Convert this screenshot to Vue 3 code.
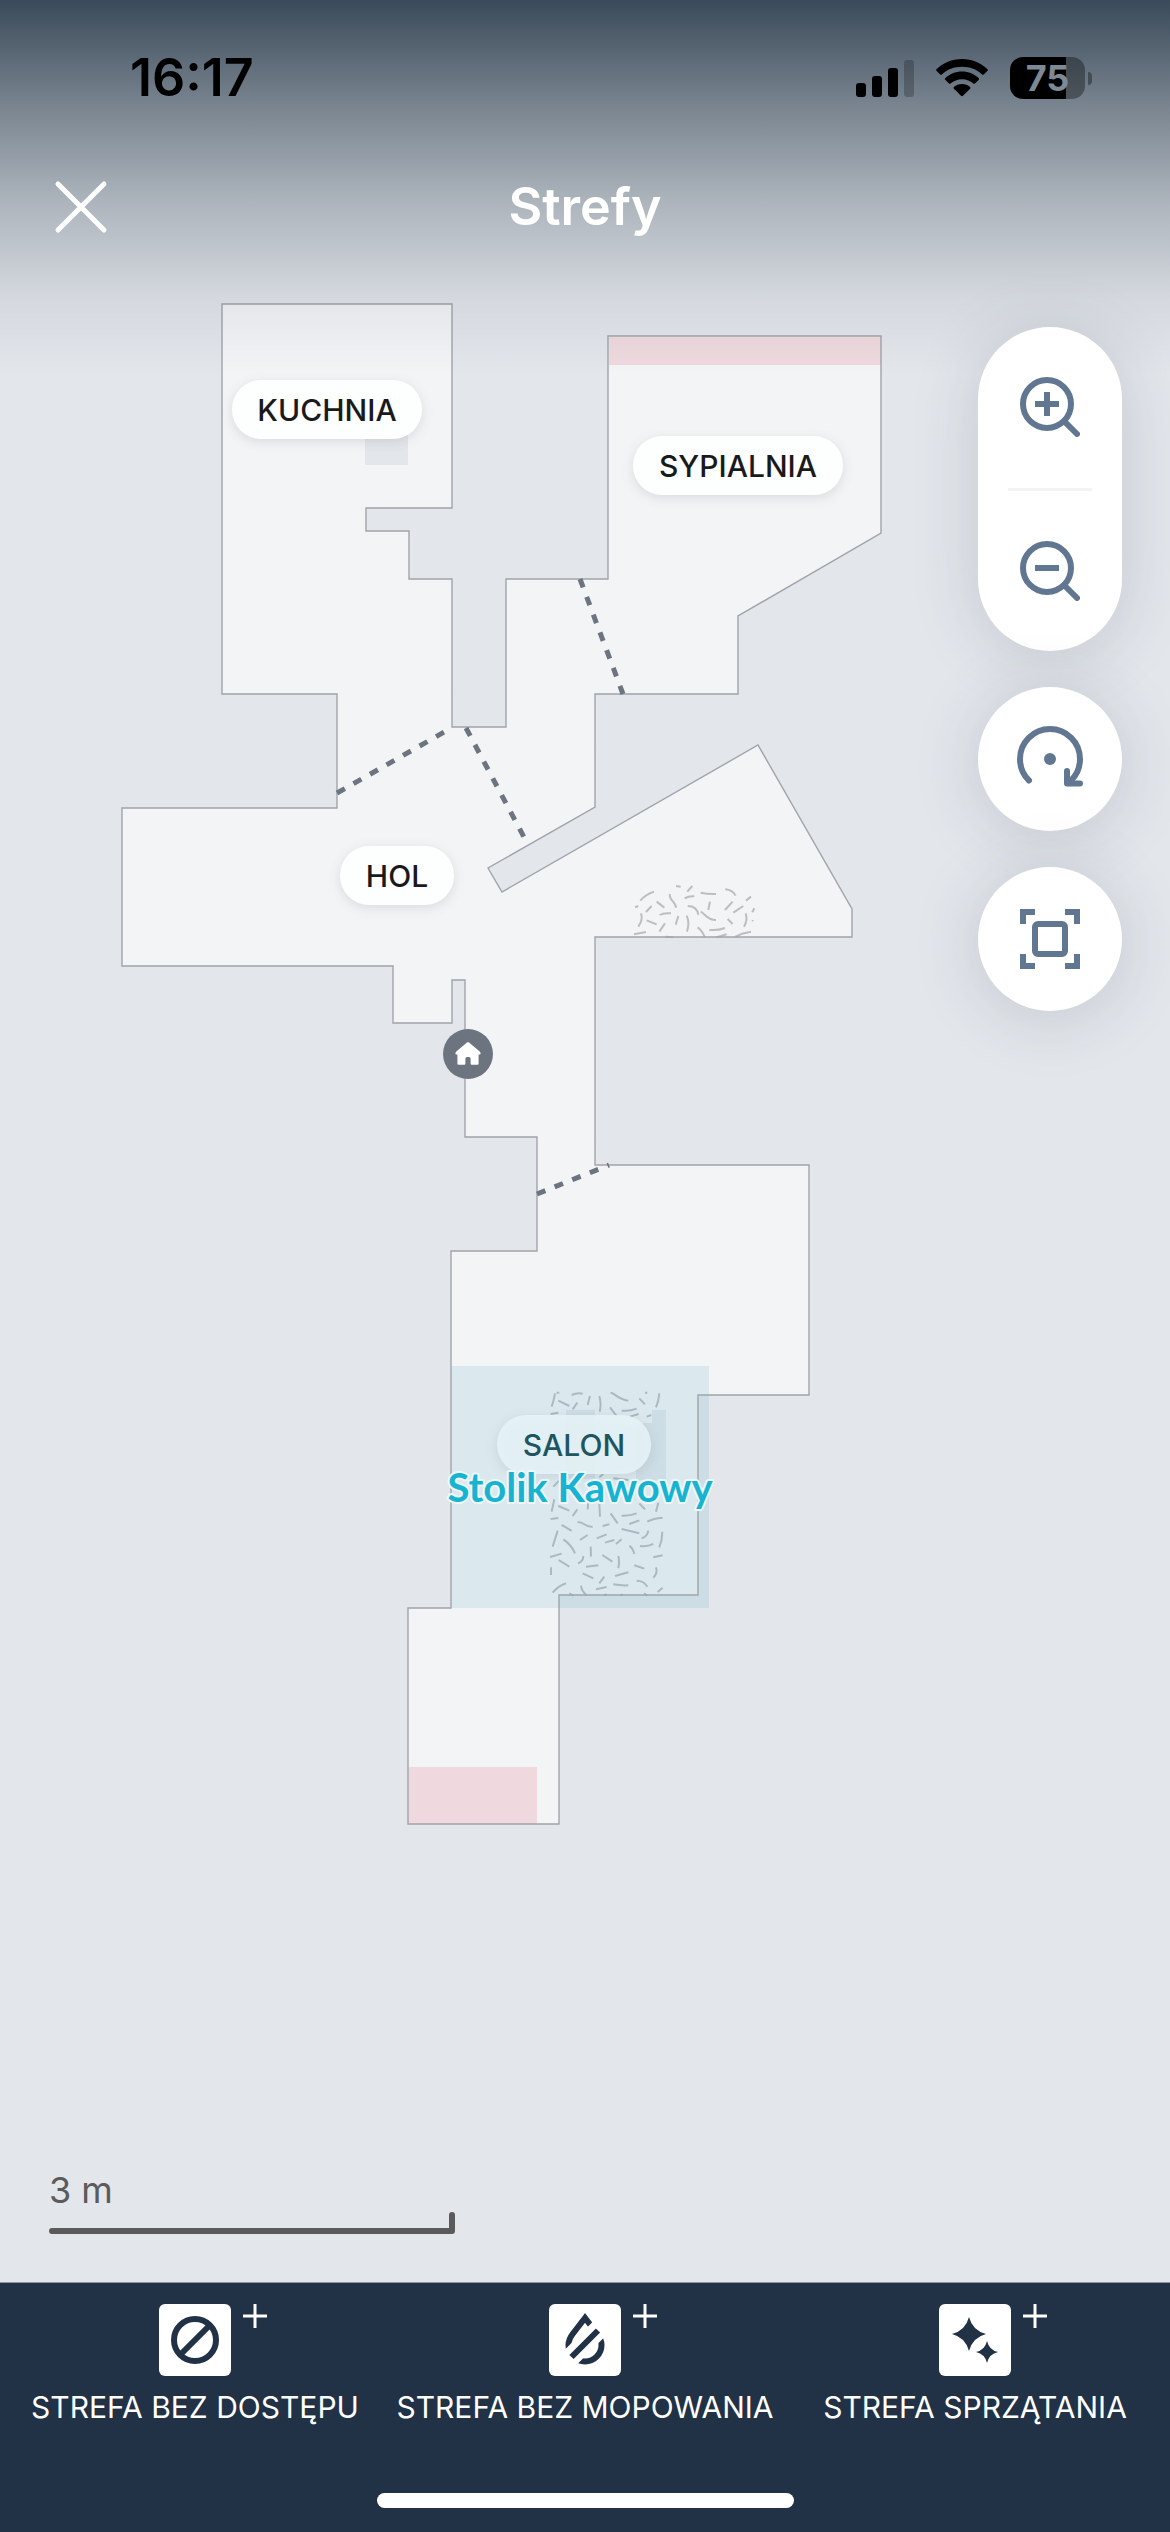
<template>
  <div class="zones">
    <main class="zones__stage">
      <!-- Floor plan -->
      <svg
        class="plan"
        viewBox="0 0 1170 2282"
        role="img"
        aria-label="Mapa mieszkania"
      >
        <path
          class="plan__floor"
          :d="outline"
        />

        <!-- Furniture -->
        <path
          class="plan__furniture"
          d="M365 420H408V465H365Z M566 1410H595V1479H566Z M652 1410H666V1480H636V1423H652Z"
        />

        <!-- Carpets -->
        <g
          v-for="carpet in carpets"
          :key="carpet.id"
          :transform="`translate(${carpet.x} ${carpet.y}) scale(0.3333)`"
        >
          <path
            class="plan__carpet"
            :d="carpet.d"
          />
        </g>

        <rect
          v-for="zone in zones"
          :key="zone.id"
          :class="`plan__zone--${zone.type}`"
          :x="zone.x"
          :y="zone.y"
          :width="zone.width"
          :height="zone.height"
        />

        <path
          class="plan__wall"
          :d="outline"
        />

        <line
          v-for="door in doors"
          :key="door.id"
          class="plan__door"
          :x1="door.x1"
          :y1="door.y1"
          :x2="door.x2"
          :y2="door.y2"
        />

        <g
          v-for="room in rooms"
          :key="room.name"
          class="room"
          :class="{ 'room--covered': room.covered }"
        >
          <rect
            class="room__pill"
            :x="room.x - room.width / 2"
            :y="room.y - 29"
            :width="room.width"
            height="59"
            rx="29"
          />
          <text
            class="room__name"
            :x="room.x"
            :y="room.y + 12"
          >{{ room.name }}</text>
        </g>

        <text
          class="plan__zone-name"
          x="580"
          y="1502"
        >Stolik Kawowy</text>

        <!-- Dock -->
        <g transform="translate(468 1054)">
          <circle
            class="plan__dock"
            r="25"
          />
          <path
            fill="#fff"
            d="M-1 -11.600Q0 -12.400 1 -11.600L12 -2.200Q13.200 -.8 12.200 .6H10.600V9.500Q10.600 10.800 9.300 10.800H3.800Q2.600 10.800 2.600 9.600V4.600Q2.600 3 1 3H-1Q-2.600 3 -2.600 4.600V9.600Q-2.600 10.800 -3.800 10.800H-9.300Q-10.600 10.800 -10.600 9.500V.6H-12.200Q-13.200 -.8 -12 -2.200Z"
          />
        </g>
      </svg>

      <!-- Header -->
      <header class="header">
        <div class="status">
          <time class="status__time">16:17</time>
          <div class="status__icons">
            <svg
              width="58"
              height="38"
              viewBox="0 0 58 38"
              aria-hidden="true"
            >
              <rect y="24" width="10" height="14" rx="3" />
              <rect x="16" y="17" width="10" height="21" rx="3" />
              <rect x="32" y="9" width="10" height="29" rx="3" />
              <rect x="48" y="1" width="10" height="37" rx="3" opacity=".22" />
            </svg>
            <svg
              width="52"
              height="38"
              viewBox="0 0 52 38"
              aria-hidden="true"
            >
              <path d="M26 0C36 0 45 4 51.500 10.200Q52.300 11 51.500 11.800L47.800 15.500Q47 16.200 46.200 15.500C41 10.500 34 7.800 26 7.800S11 10.500 5.800 15.500Q5 16.200 4.200 15.500L.5 11.800Q-.3 11 .5 10.200C7 4 16 0 26 0Z" />
              <path d="M26 12.600C32.600 12.600 38.500 15.200 42.800 19.200Q43.600 20 42.800 20.800L39 24.500Q38.200 25.200 37.400 24.500C34.400 21.800 30.400 20.200 26 20.200S17.600 21.800 14.600 24.500Q13.800 25.200 13 24.500L9.200 20.800Q8.400 20 9.200 19.200C13.500 15.200 19.400 12.600 26 12.600Z" />
              <path d="M26 25C29.200 25 32 26.200 34.100 28.100Q34.900 29 34.100 29.800L27 36.800Q26 37.700 25 36.800L17.900 29.800Q17.100 29 17.900 28.100C20 26.200 22.800 25 26 25Z" />
            </svg>
            <div class="battery">
              <span class="battery__body">75</span>
              <span class="battery__tip" />
            </div>
          </div>
        </div>

        <div class="header__nav">
          <button
            class="header__close"
            type="button"
            aria-label="Zamknij"
          >
            <svg
              width="54"
              height="54"
              viewBox="0 0 54 54"
            >
              <path
                d="M4 4L50 50M50 4L4 50"
                fill="none"
                stroke="#fff"
                stroke-width="5"
                stroke-linecap="round"
              />
            </svg>
          </button>
          <h1 class="header__title">Strefy</h1>
        </div>
      </header>

      <!-- Map controls -->
      <div class="controls">
        <div class="controls__group">
          <button
            class="controls__button"
            type="button"
            aria-label="Powiększ"
          >
            <svg
              class="controls__icon"
              width="60"
              height="60"
              viewBox="0 0 60 60"
            >
              <circle cx="27" cy="27" r="24" />
              <path d="M27 15V39M15 27H39" />
              <path d="M45 45L57 57" stroke-linecap="round" />
            </svg>
          </button>
          <span class="controls__divider" />
          <button
            class="controls__button"
            type="button"
            aria-label="Pomniejsz"
          >
            <svg
              class="controls__icon"
              width="60"
              height="60"
              viewBox="0 0 60 60"
            >
              <circle cx="27" cy="27" r="24" />
              <path d="M15 27H39" />
              <path d="M45 45L57 57" stroke-linecap="round" />
            </svg>
          </button>
        </div>

        <button
          class="controls__button controls__button--round"
          type="button"
          aria-label="Obróć mapę"
        >
          <svg
            class="controls__icon"
            width="72"
            height="72"
            viewBox="0 0 72 72"
          >
            <g
              stroke-linecap="round"
              stroke-linejoin="round"
            >
              <path d="M15 57.500A30 30 0 1 1 57 57.500L53.500 60" />
              <path d="M53 48V60.600H66" />
            </g>
            <circle
              class="controls__dot"
              cx="36"
              cy="36"
              r="6"
            />
          </svg>
        </button>

        <button
          class="controls__button controls__button--round"
          type="button"
          aria-label="Dopasuj mapę"
        >
          <svg
            class="controls__icon"
            width="60"
            height="60"
            viewBox="0 0 60 60"
          >
            <rect x="15" y="15" width="30" height="30" rx="3" />
            <path d="M3 15V3H15M45 3H57V15M57 45V57H45M15 57H3V45" />
          </svg>
        </button>
      </div>

      <!-- Scale -->
      <div class="scale">
        <span class="scale__label">3 m</span>
        <svg
          width="406"
          height="22"
          viewBox="0 0 406 22"
          aria-hidden="true"
        >
          <path
            d="M3 19H403V3"
            fill="none"
            stroke="#5b5b5b"
            stroke-width="6"
            stroke-linecap="round"
            stroke-linejoin="round"
          />
        </svg>
      </div>
    </main>

    <!-- Add a zone -->
    <footer class="toolbar">
      <div class="toolbar__actions">
        <button
          v-for="action in actions"
          :key="action.id"
          class="action"
          type="button"
        >
          <span class="action__icon">
            <svg
              v-if="action.id === 'no-go'"
              width="72"
              height="72"
              viewBox="0 0 72 72"
              fill="none"
              stroke="#213146"
              stroke-width="6"
            >
              <circle cx="36" cy="36" r="21" />
              <path d="M21.500 50.500L50.500 21.500" />
            </svg>
            <svg
              v-else-if="action.id === 'no-mop'"
              width="72"
              height="72"
              viewBox="0 0 72 72"
              fill="none"
              stroke="#213146"
              stroke-width="6"
            >
              <path d="M36 14L24 29.500C20.500 34 19.500 37 19.500 41A16.500 16.500 0 0 0 52.500 41C52.500 37 51.500 34 48 29.500Z" />
              <path
                d="M10 65L66 9"
                stroke="#fff"
                stroke-width="19"
              />
              <path d="M22.500 53L49 26.500" />
            </svg>
            <svg
              v-else
              width="72"
              height="72"
              viewBox="0 0 72 72"
              fill="#213146"
            >
              <path d="M30 13Q33.500 26.500 47 30Q33.500 33.500 30 47Q26.500 33.500 13 30Q26.500 26.500 30 13Z" />
              <path d="M30 19L35 25L41 30L35 35L30 41L25 35L19 30L25 25Z" />
              <path d="M48 37Q50 46 59 48Q50 50 48 59Q46 50 37 48Q46 46 48 37Z" />
              <path d="M48 41L51 45L55 48L51 51L48 55L45 51L41 48L45 45Z" />
            </svg>
          </span>
          <svg
            class="action__plus"
            width="24"
            height="24"
            viewBox="0 0 24 24"
            aria-hidden="true"
          >
            <path
              d="M12 0V24M0 12H24"
              stroke="#fff"
              stroke-width="3"
            />
          </svg>
          <span class="action__label">{{ action.label }}</span>
        </button>
      </div>
      <div class="toolbar__indicator" />
    </footer>
  </div>
</template>

<script setup>
// Wall outline, clockwise from the kitchen's top-left corner
const outline = [
  'M222 304H452V508H366V531H409V579H452V727H506V579H608V336H881V533L738 616V694',
  'H595V807L488 868L502 892L758 745L852 909V937H595V1165H809V1395H698V1595',
  'H559V1824H408V1608H451V1251H537V1137H465V980H452V1023H393V966H122V808H337V694H222Z'
].join('')

const rooms = [
  { name: 'KUCHNIA', x: 327, y: 409, width: 190 },
  { name: 'SYPIALNIA', x: 738, y: 465, width: 210 },
  { name: 'HOL', x: 397, y: 875, width: 114 },
  { name: 'SALON', x: 574, y: 1444, width: 154, covered: true }
]

const zones = [
  { id: 1, type: 'no-go', x: 609, y: 337, width: 272, height: 28 },
  { id: 2, type: 'no-go', x: 408, y: 1767, width: 129, height: 57 },
  { id: 3, type: 'clean', x: 451, y: 1366, width: 258, height: 242 }
]

const doors = [
  { id: 1, x1: 337, y1: 793, x2: 446, y2: 731 },
  { id: 2, x1: 466, y1: 728, x2: 525, y2: 839 },
  { id: 3, x1: 580, y1: 579, x2: 623, y2: 694 },
  { id: 4, x1: 537, y1: 1194, x2: 609, y2: 1165 }
]

// Fibre strokes, drawn at three units per map unit
const carpets = [
  {
    id: 'salon',
    x: 400,
    y: 1340,
    d: [
      'M465 160Q462 180 455 200M470 158H478M515 165Q530 158 548 161M475 182L508 198M532 188L518 208M570 168L563 195',
      'M598 168Q605 192 599 215M632 160C640 154 650 178 685 182M718 175L735 193M735 158H742M778 160Q777 182 768 202',
      'M452 222L475 218M665 212Q690 214 710 206M630 202L650 228M690 230L716 222M740 230L754 225',
      'M460 440L480 420M598 412L610 402M640 415L685 420',
      'M463 478L455 515M475 498L508 512M532 508L518 528M598 490L600 530M565 485L563 508M632 520L653 550',
      'M665 527Q690 528 710 520M718 490L735 508M775 488L768 515M452 537L475 534M742 545Q760 535 788 533M688 552L718 541',
      'M533 546C555 546 552 562 578 560M608 558L628 553M665 567L718 580M485 555L515 573M540 600L563 585M590 595L620 583',
      'M615 608L643 600M648 612L665 598M725 595Q742 590 745 572M473 572L458 620M490 598Q515 615 525 640M572 620L573 650',
      'M688 618Q698 622 703 642M720 618Q740 622 760 612M787 575Q787 600 778 622M450 651L485 641M607 645L637 665',
      'M655 648Q659 665 655 685M760 652L788 646M476 660L508 680M534 670Q550 665 550 648M558 680L595 676M703 676L733 686',
      'M768 682Q774 700 760 713M453 682V705M645 708L685 697M548 700L580 715M598 730L613 710M640 733Q660 737 685 736',
      'M458 758Q475 738 498 730M588 748L620 741M710 722Q732 722 742 740M543 737Q545 755 560 765M773 756L788 743M508 760L520 767M612 767L620 762M662 767L668 762M732 760L742 767'
    ].join('')
  },
  {
    id: 'hol',
    x: 460,
    y: 720,
    d: [
      'M525 562L535 558M541 542Q555 525 582 515M558 576L575 558M590 545L613 563M543 580Q550 598 535 620',
      'M522 643L558 636M560 601L590 613M599 585Q610 578 633 580M598 635L615 610M655 588L647 614M630 522C625 540 648 545 648 563',
      'M648 498L662 500M682 515L697 498M674 535Q685 528 703 529M683 558C705 558 713 570 715 585M680 587Q690 608 681 635',
      'M713 622Q725 630 735 652M722 518Q745 523 768 522M750 545L745 570M722 575C735 580 740 600 768 600M748 630Q775 632 795 624',
      'M770 652L800 643M616 650L640 652M796 508Q818 510 827 527M795 570L818 545M820 578L850 558M803 597L818 612',
      'M857 580Q864 600 852 620M858 542L873 530M883 565L877 577M878 600V604M826 650Q848 638 873 635'
    ].join('')
  }
]

const actions = [
  { id: 'no-go', label: 'STREFA BEZ DOSTĘPU' },
  { id: 'no-mop', label: 'STREFA BEZ MOPOWANIA' },
  { id: 'clean', label: 'STREFA SPRZĄTANIA' }
]
</script>

<style>
body {
  margin: 0;
  background: #e3e6eb;
}
</style>

<style scoped>
.zones {
  display: flex;
  flex-direction: column;
  min-height: 100vh;

  background: #e3e6eb;
  font-family: Inter, "Liberation Sans", sans-serif;
}

button {
  padding: 0;
  border: none;
  background: transparent;
  font: inherit;
  cursor: pointer;
}

svg {
  display: block;
}

/* Map, header and controls share one cell and stack in source order */
.zones__stage {
  display: grid;
  flex: 1;
}

.zones__stage > * {
  grid-area: 1 / 1;
}

/* ==================== Floor plan ==================== */

.plan {
  width: 100%;
  height: auto;
}

.plan__floor {
  fill: #f3f4f6;
}

.plan__furniture {
  fill: #e3e6eb;
}

.plan__carpet {
  fill: none;
  stroke: #bcbec1;
  stroke-width: 6;
}

.plan__zone--no-go {
  fill: rgba(222, 60, 75, 0.14);
}

.plan__zone--clean {
  fill: rgba(51, 160, 187, 0.12);
}

.plan__wall {
  fill: none;
  stroke: #a0a4ab;
  stroke-width: 1.4;
}

.plan__door {
  stroke: #6c757f;
  stroke-width: 5;
  stroke-dasharray: 9 10;
}

.plan__dock {
  fill: #6c757f;
}

.plan__zone-name {
  font-family: Lato, "Noto Sans", sans-serif;
  font-size: 40px;
  font-weight: 700;
  text-anchor: middle;
  fill: #16b4d0;
  stroke: #eef6f9;
  stroke-width: 4;
  stroke-linejoin: round;
  paint-order: stroke;
}

.room__pill {
  fill: #fdfefe;
  filter: drop-shadow(0 3px 6px rgba(40, 50, 60, 0.12));
}

.room__name {
  font-size: 30px;
  font-weight: 500;
  text-anchor: middle;
  fill: #1a1a1a;
}

.room--covered .room__pill {
  fill: rgba(230, 244, 248, 0.88);
}

.room--covered .room__name {
  fill: #1f5560;
}

/* ==================== Header ==================== */

.header {
  align-self: start;
  padding-bottom: 102px;

  background: linear-gradient(
    rgba(33, 51, 68, 0.87) 0%,
    rgba(33, 51, 68, 0.56) 27%,
    rgba(33, 51, 68, 0.28) 54%,
    rgba(33, 51, 68, 0.07) 80%,
    rgba(33, 51, 68, 0) 100%
  );
}

.status {
  box-sizing: border-box;
  display: flex;
  align-items: center;
  justify-content: space-between;
  height: 141px;
  padding: 15px 78px 0 130px;
}

.status__time {
  font-size: 52px;
  font-weight: 600;
  line-height: 60px;
  color: #000;
}

.status__icons {
  display: flex;
  align-items: center;
  gap: 22px;
}

.battery {
  display: flex;
  align-items: center;
  gap: 3px;
}

.battery__body {
  width: 75px;
  border-radius: 13px;

  background: linear-gradient(90deg, #000 56px, rgba(0, 0, 0, 0.35) 56px);
  color: #7d8995;
  font-size: 36px;
  font-weight: 700;
  line-height: 42px;
  text-align: center;
}

.battery__tip {
  width: 4px;
  height: 13px;
  border-radius: 0 4px 4px 0;
  background: rgba(0, 0, 0, 0.35);
}

.header__nav {
  display: grid;
  grid-template-columns: 54px 1fr 54px;
  align-items: center;
  height: 132px;
  padding: 0 54px;
}

.header__title {
  margin: 0;
  font-size: 52px;
  font-weight: 600;
  line-height: 60px;
  text-align: center;
  color: #fff;
}

/* ==================== Controls ==================== */

.controls {
  display: flex;
  flex-direction: column;
  align-self: start;
  justify-self: end;
  gap: 36px;
  margin: 327px 48px 0 0;
}

.controls__group,
.controls__button--round {
  border-radius: 72px;
  background: #fff;
  box-shadow: 0 6px 66px rgba(50, 65, 85, 0.18);
}

.controls__group {
  display: flex;
  flex-direction: column;
  align-items: center;
  width: 144px;
  height: 324px;
}

.controls__button {
  display: flex;
  align-items: center;
  justify-content: center;
  flex: 1;
  width: 144px;
}

.controls__button--round {
  flex: none;
  height: 144px;
}

.controls__divider {
  width: 84px;
  height: 3px;
  background: #f3f3f3;
}

.controls__icon {
  fill: none;
  stroke: #617691;
  stroke-width: 6;
}

.controls__dot {
  fill: #617691;
  stroke: none;
}

/* ==================== Scale ==================== */

.scale {
  display: flex;
  flex-direction: column;
  align-self: end;
  justify-self: start;
  margin: 0 0 48px 49px;
}

.scale__label {
  font-size: 36px;
  line-height: 44px;
  color: #5b5b5b;
}

/* ==================== Toolbar ==================== */

.toolbar {
  box-sizing: border-box;
  display: flex;
  flex-direction: column;
  justify-content: space-between;
  min-height: 250px;
  padding: 21px 0 24px;
  border-top: 1px solid #8d95a1;

  background: #213146;
}

.toolbar__actions {
  display: grid;
  grid-template-columns: repeat(3, 1fr);
}

.action {
  display: grid;
  grid-template-columns: 1fr 72px 1fr;
  row-gap: 13px;
}

.action__icon {
  grid-column: 2;
  border-radius: 6px;
  background: #fff;
}

.action__plus {
  margin-left: 12px;
}

.action__label {
  grid-column: 1 / -1;
  font-size: 30px;
  line-height: 36px;
  color: #fff;
  text-align: center;
  white-space: nowrap;
}

.toolbar__indicator {
  align-self: center;
  width: 417px;
  height: 15px;
  border-radius: 8px;
  background: #fff;
}
</style>
